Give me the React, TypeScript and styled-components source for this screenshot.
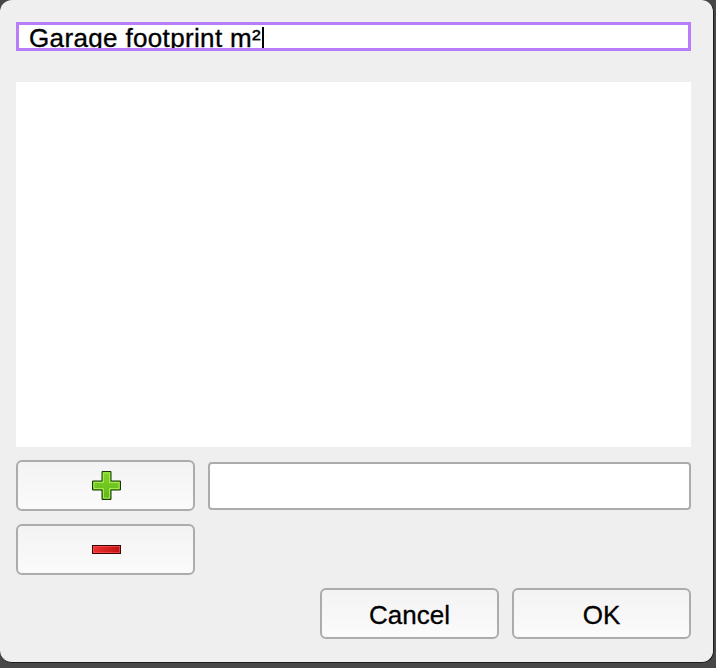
import styled, { createGlobalStyle } from "styled-components";

const GlobalStyle = createGlobalStyle`
  html, body {
    margin: 0;
    padding: 0;
    background: #474747;
    font-family: "Liberation Sans", Arial, sans-serif;
  }
`;

function PlusIcon() {
  return (
    <svg width="29" height="29" viewBox="0 0 29 29">
      <defs>
        <linearGradient id="plusFill" x1="0" y1="0" x2="0" y2="1">
          <stop offset="0" stopColor="#7fd628" />
          <stop offset="1" stopColor="#62b41a" />
        </linearGradient>
      </defs>
      <path
        d="M10 0.5 H19 V10 H28.5 V19 H19 V28.5 H10 V19 H0.5 V10 H10 Z"
        fill="url(#plusFill)"
        stroke="#1a3506"
        strokeWidth="1"
      />
      <path
        d="M11.5 2 H17.5 V11.5 H27 V17.5 H17.5 V27 H11.5 V17.5 H2 V11.5 H11.5 Z"
        fill="none"
        stroke="#a2ea52"
        strokeWidth="1"
      />
    </svg>
  );
}

function MinusIcon() {
  return (
    <svg width="29" height="9" viewBox="0 0 29 9">
      <defs>
        <linearGradient id="minusFill" x1="0" y1="0" x2="1" y2="0">
          <stop offset="0" stopColor="#f03232" />
          <stop offset="1" stopColor="#c01212" />
        </linearGradient>
      </defs>
      <rect x="0.5" y="0.5" width="28" height="8" fill="url(#minusFill)" stroke="#3a0505" strokeWidth="1" />
      <rect x="1.5" y="1.5" width="26" height="6" fill="none" stroke="#ff5a5a" strokeWidth="1" opacity="0.6" />
    </svg>
  );
}

export default function App() {
  return (
    <>
      <GlobalStyle />
      <Window>
        <TitleField>
          Garage footprint m²<Caret />
        </TitleField>
        <ListArea />
        <EditRow>
          <ToolButton aria-label="Add">
            <PlusIcon />
          </ToolButton>
          <ValueField />
        </EditRow>
        <EditRow>
          <ToolButton aria-label="Remove">
            <MinusIcon />
          </ToolButton>
        </EditRow>
        <Footer>
          <DialogButton>Cancel</DialogButton>
          <DialogButton>OK</DialogButton>
        </Footer>
      </Window>
    </>
  );
}

const Window = styled.div`
  box-sizing: border-box;
  width: 714px;
  height: 663px;
  background: #efefef;
  border: 1px solid #1c1c1c;
  border-top: none;
  border-left: none;
  border-radius: 12px;
  padding: 22px 22px 0 16px;
  display: flex;
  flex-direction: column;
`;

const TitleField = styled.div`
  box-sizing: border-box;
  height: 29px;
  border: 3px solid #b77dfb;
  background: #ffffff;
  padding: 0 0 0 10px;
  font-size: 26px;
  letter-spacing: 0.35px;
  line-height: 27px;
  -webkit-text-stroke: 0.35px #000;
  color: #000;
  overflow: hidden;
  white-space: nowrap;
  display: flex;
  align-items: flex-start;
`;

const Caret = styled.span`
  display: inline-block;
  width: 2px;
  height: 22px;
  margin-top: 2px;
  margin-left: 1px;
  background: #000;
`;

const ListArea = styled.div`
  margin-top: 31px;
  height: 365px;
  background: #ffffff;
`;

const EditRow = styled.div`
  display: flex;
  align-items: flex-start;
  gap: 13px;
  margin-top: 13px;
`;

const ToolButton = styled.button`
  box-sizing: border-box;
  width: 179px;
  height: 51px;
  flex: none;
  border: 2px solid #acacac;
  border-radius: 6px;
  background: linear-gradient(#f3f3f3, #fbfbfb);
  display: flex;
  align-items: center;
  justify-content: center;
  padding: 0 0 0 2px;
`;

const ValueField = styled.div`
  box-sizing: border-box;
  flex: 1;
  height: 48px;
  margin-top: 2px;
  background: #ffffff;
  border: 2px solid #acacac;
  border-radius: 4px;
`;

const Footer = styled.div`
  display: flex;
  justify-content: flex-end;
  gap: 13px;
  margin-top: 13px;
`;

const DialogButton = styled.button`
  box-sizing: border-box;
  width: 179px;
  height: 51px;
  border: 2px solid #acacac;
  border-radius: 6px;
  background: linear-gradient(#f3f3f3, #fbfbfb);
  font-family: "Liberation Sans", Arial, sans-serif;
  font-size: 26px;
  -webkit-text-stroke: 0.3px #000;
  color: #000;
  padding: 3px 0 0;
`;
